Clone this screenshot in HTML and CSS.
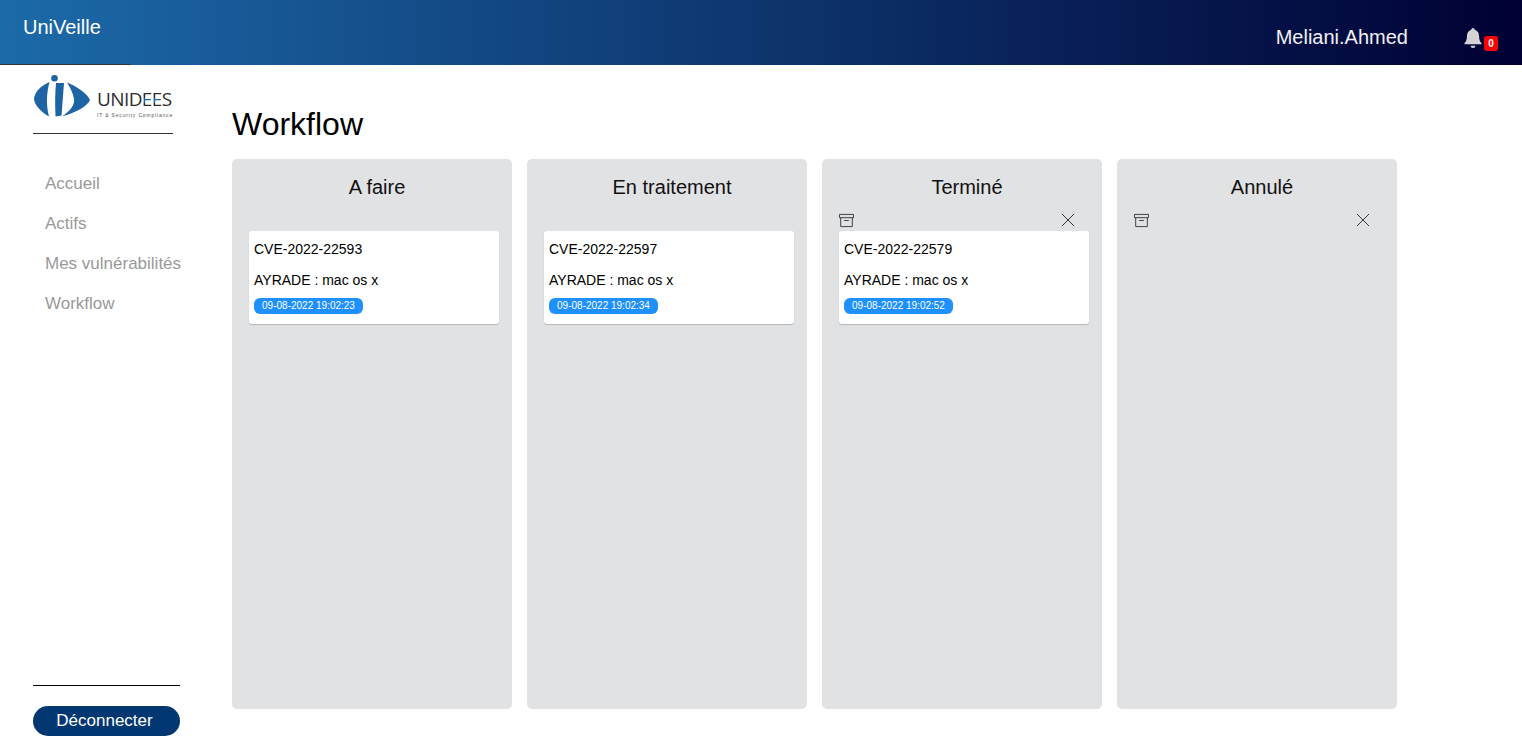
FILE: index.html
```html
<!DOCTYPE html>
<html lang="fr">
<head>
    <meta charset="UTF-8">
    <meta name="viewport" content="width=device-width, initial-scale=1.0">
    <title>UniVeille</title>
    <link rel="stylesheet" href="styles.css">
</head>
<body>
    <header class="topbar">
        <div class="brand">UniVeille</div>
        <div class="user-name">Meliani.Ahmed</div>
        <div class="bell">
            <svg width="18" height="20" viewBox="1 0.5 16 18.700">
                <path d="M9 0.500c-1 0-1.600.700-1.600 1.600C4.700 2.900 3.300 5.100 3.300 8c0 3.600-.8 5.300-2.300 6.700v1h16v-1c-1.500-1.400-2.300-3.100-2.300-6.700 0-2.900-1.400-5.100-4.100-5.900C10.600 1.200 10 .5 9 .5z" fill="#d4d4d4"/>
                <path d="M6.800 17a2.200 2.200 0 0 0 4.400 0z" fill="#d4d4d4"/>
            </svg>
            <span class="bell-count">0</span>
        </div>
    </header>
    <div class="page">
        <aside class="sidebar">
            <div class="header-rule"></div>
            <div class="logo">
                <svg class="logo-mark" width="57" height="45" viewBox="0 0 57 45">
                    <circle cx="20.500" cy="3.300" r="3.300" fill="#1d64a4"/>
                    <path d="M15.500 7C7 10.500 .5 17 0 24C.5 30 7 37 15 41.500C12 30 12.500 18 15.500 7z" fill="#1d64a4"/>
                    <path d="M22 8h8L27.500 40.500L21.500 41.500C21 30 21 18 22 8z" fill="#1d64a4"/>
                    <path d="M33 7.500C42 11 54 19 56 25C54 31 41 38 28 41.500C36 36 41 30 40 24C39 18 36 12 33 7.500z" fill="#1d64a4"/>
                </svg>
                <div class="logo-text">
                    <div class="logo-name">UNID<span class="logo-e">EE</span>S</div>
                    <div class="logo-tag">IT &amp; Security Compliance</div>
                </div>
            </div>
            <div class="logo-rule"></div>
            <nav class="nav">
                <a>Accueil</a>
                <a>Actifs</a>
                <a>Mes vulnérabilités</a>
                <a>Workflow</a>
            </nav>
            <div class="logout">
                <button class="logout-btn">Déconnecter</button>
            </div>
        </aside>
        <main class="content">
            <h1>Workflow</h1>
            <div class="board">
                <section class="column">
                    <h2>A faire</h2>
                    <div class="tools"></div>
                    <div class="card">
                        <p>CVE-2022-22593</p>
                        <p>AYRADE : mac os x</p>
                        <span class="chip">09-08-2022 19:02:23</span>
                    </div>
                </section>
                <section class="column">
                    <h2>En traitement</h2>
                    <div class="tools"></div>
                    <div class="card">
                        <p>CVE-2022-22597</p>
                        <p>AYRADE : mac os x</p>
                        <span class="chip">09-08-2022 19:02:34</span>
                    </div>
                </section>
                <section class="column">
                    <h2>Terminé</h2>
                    <div class="tools">
                        <svg width="16" height="16" viewBox="0 0 16 16" fill="none" stroke="#33393f"><path d="M.5 1.500h15v3.500H.5zM1.800 5v9.500h12.400V5M5.500 8h5"/></svg>
                        <svg width="14" height="14" viewBox="0 0 14 14" fill="none" stroke="#33393f"><path d="M1 1l12 12M13 1L1 13"/></svg>
                    </div>
                    <div class="card">
                        <p>CVE-2022-22579</p>
                        <p>AYRADE : mac os x</p>
                        <span class="chip">09-08-2022 19:02:52</span>
                    </div>
                </section>
                <section class="column">
                    <h2>Annulé</h2>
                    <div class="tools">
                        <svg width="16" height="16" viewBox="0 0 16 16" fill="none" stroke="#33393f"><path d="M.5 1.500h15v3.500H.5zM1.800 5v9.500h12.400V5M5.500 8h5"/></svg>
                        <svg width="14" height="14" viewBox="0 0 14 14" fill="none" stroke="#33393f"><path d="M1 1l12 12M13 1L1 13"/></svg>
                    </div>
                </section>
            </div>
        </main>
    </div>
</body>
</html>
```

FILE: styles.css
```css
* {
    box-sizing: border-box;
}

body {
    font-family: "Liberation Sans", Arial, sans-serif;
    margin: 0;
    height: 756px;
    overflow: hidden;
    background-color: #ffffff;
    color: #000000;
}

.topbar {
    height: 65px;
    display: flex;
    align-items: flex-start;
    color: #ffffff;
    font-size: 20px;
    background: linear-gradient(90deg, #1c6aa9 0%, #000033 100%);
}

.brand {
    margin: 16px auto 0 23px;
}

.user-name {
    margin-top: 26px;
    color: #f0f0f5;
}

.bell {
    position: relative;
    margin: 28px 39px 0 56px;
    width: 19px;
}

.bell svg {
    display: block;
}

.bell-count {
    position: absolute;
    left: 20px;
    top: 8px;
    width: 14px;
    height: 15px;
    border-radius: 3px;
    background-color: #ff0000;
    font-size: 10px;
    font-weight: bold;
    line-height: 15px;
    text-align: center;
}

.page {
    display: flex;
    height: 691px;
}

.sidebar {
    width: 232px;
    flex-shrink: 0;
    display: flex;
    flex-direction: column;
    padding-left: 33px;
}

.header-rule {
    width: 131px;
    height: 1px;
    margin: -1px 0 0 -33px;
    background-color: #333333;
}

.logo {
    display: flex;
    align-items: flex-start;
    height: 60px;
    padding-left: 1px;
    padding-top: 10px;
}

.logo-text {
    margin: 12px 0 0 6px;
    color: #2c2c30;
}

.logo-name {
    font-family: "Open Sans", sans-serif;
    font-size: 19px;
    line-height: 25px;
    letter-spacing: -0.6px;
}

.logo-e {
    color: transparent;
    background: linear-gradient(180deg, #2c2c30 0 48%, #1d64a4 48% 66%, #2c2c30 66% 100%);
    -webkit-background-clip: text;
    background-clip: text;
}

.logo-tag {
    font-size: 5px;
    line-height: 6px;
    letter-spacing: 0.82px;
    white-space: nowrap;
    color: #555555;
}

.logo-rule {
    width: 140px;
    height: 1px;
    margin-top: 8px;
    background-color: #333333;
}

.nav {
    display: flex;
    flex-direction: column;
    gap: 20px;
    margin: 40px 0 0 12px;
    font-size: 17px;
    line-height: 20px;
    color: #999999;
}

.logout {
    margin-top: auto;
    width: 147px;
    border-top: 1px solid #000000;
    padding-top: 20px;
    margin-bottom: 20px;
}

.logout-btn {
    display: block;
    width: 100%;
    height: 30px;
    padding: 0 4px 0 0;
    border: none;
    border-radius: 15px;
    background-color: #033772;
    color: #ffffff;
    font-family: inherit;
    font-size: 17px;
}

.content {
    flex: 1;
}

h1 {
    margin: 41px 0 0;
    font-size: 32px;
    font-weight: normal;
    line-height: 37px;
}

.board {
    display: flex;
    gap: 15px;
    margin-top: 16px;
}

.column {
    width: 280px;
    height: 550px;
    padding: 0 17px;
    border-radius: 5px;
    background-color: #e1e2e4;
}

h2 {
    margin: 0;
    padding-top: 17px;
    padding-left: 10px;
    font-size: 20px;
    font-weight: normal;
    line-height: 23px;
    text-align: center;
    color: #111111;
}

.tools {
    height: 32px;
    display: flex;
    justify-content: space-between;
    align-items: flex-start;
    padding: 14px 10px 0 0;
}

.tools svg:first-child {
    width: 15px;
    height: 15px;
}

.card {
    width: 250px;
    height: 93px;
    padding: 10px 5px 0;
    border-radius: 3px;
    background-color: #ffffff;
    box-shadow: 0 1px 1px rgba(0, 0, 0, 0.2);
}

.card p {
    margin: 0 0 15px;
    font-size: 14px;
    line-height: 16px;
}

.chip {
    display: block;
    width: 109px;
    height: 16px;
    margin-top: -5px;
    border-radius: 6px;
    background-color: #1e90ff;
    color: #ffffff;
    font-size: 10px;
    line-height: 16px;
    text-align: center;
}
```
